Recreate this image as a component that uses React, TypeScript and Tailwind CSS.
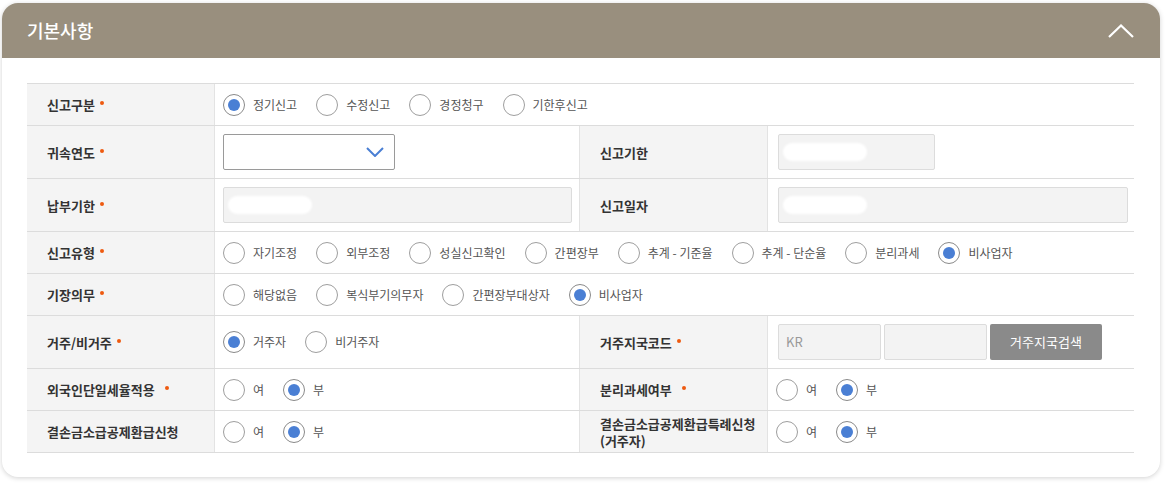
import React from "react";

type Opt = { label: string; checked?: boolean };

function Radio({ label, checked }: Opt) {
  return (
    <label className="flex items-center mr-[19px] shrink-0">
      <span
        className={`w-[22px] h-[22px] rounded-full border bg-white flex items-center justify-center ${
          checked ? "border-[#8a8a8a]" : "border-[#9e9e9e]"
        }`}
      >
        {checked && <span className="w-[12px] h-[12px] rounded-full bg-[#4a7fd4]" />}
      </span>
      <span className="ml-2 text-[12px] text-[#555] whitespace-pre">{label}</span>
    </label>
  );
}

function Radios({ items }: { items: Opt[] }) {
  return (
    <div className="flex items-center">
      {items.map((o) => (
        <Radio key={o.label} {...o} />
      ))}
    </div>
  );
}

function Label({ children, req, spaced }: { children: React.ReactNode; req?: boolean; spaced?: boolean }) {
  return (
    <div className="w-[187px] shrink-0 bg-[#f4f4f4] flex items-center pl-5 pr-2 text-[13px] font-semibold text-[#333] leading-[17px]">
      <div>{children}</div>
      {req && (
        <span
          className={`w-[4px] h-[4px] rounded-full bg-[#ee5a10] mb-[3px] ${spaced ? "ml-[10px]" : "ml-[5px]"}`}
        />
      )}
    </div>
  );
}

function Value({ children, wide }: { children?: React.ReactNode; wide?: boolean }) {
  return (
    <div
      className={`flex items-center pl-[8px] border-l border-[#e3e3e3] ${
        wide ? "flex-1" : "w-[366px] shrink-0 border-r"
      }`}
    >
      {children}
    </div>
  );
}

function Blob() {
  return <span className="block ml-[4px] w-[84px] h-[18px] rounded-[10px] bg-white blur-[1px]" />;
}

function Row({ children, tall }: { children: React.ReactNode; tall?: boolean }) {
  return (
    <div className={`flex border-b border-[#dcdcdc] ${tall ? "h-[53px]" : "h-[42px]"}`}>{children}</div>
  );
}

export default function App() {
  return (
    <div className="min-h-[488px] bg-white pt-[3px] pl-[2px] font-['Noto_Sans_CJK_KR','Noto_Sans',sans-serif]">
      <div className="w-[1158px] h-[474px] rounded-[16px] bg-white shadow-[0_1px_5px_rgba(0,0,0,0.18)] overflow-hidden">
        <div className="h-[55px] bg-[#998f7e] flex items-center justify-between pl-[25px] pr-[26px]">
          <h2 className="text-[18px] font-medium text-white">기본사항</h2>
          <svg width="26" height="14" viewBox="0 0 26 14" fill="none">
            <path d="M1 13 L13 1.5 L25 13" stroke="white" strokeWidth="2.2" />
          </svg>
        </div>

        <div className="mt-[25px] mx-[25px] w-[1107px] border-t border-[#dcdcdc]">
          <Row>
            <Label req>신고구분</Label>
            <Value wide>
              <Radios
                items={[
                  { label: "정기신고", checked: true },
                  { label: "수정신고" },
                  { label: "경정청구" },
                  { label: "기한후신고" },
                ]}
              />
            </Value>
          </Row>

          <Row tall>
            <Label req>귀속연도</Label>
            <Value>
              <div className="w-[172px] h-[36px] border border-[#9a9a9a] rounded-[2px] bg-white flex items-center justify-end pr-[10px]">
                <svg width="18" height="10" viewBox="0 0 18 10" fill="none">
                  <path d="M1 1 L9 9 L17 1" stroke="#4a7fd4" strokeWidth="2" />
                </svg>
              </div>
            </Value>
            <Label>신고기한</Label>
            <Value wide>
              <div className="ml-[2px] w-[157px] h-[36px] border border-[#dcdcdc] rounded-[2px] bg-[#f3f3f3] flex items-center">
                <Blob />
              </div>
            </Value>
          </Row>

          <Row tall>
            <Label req>납부기한</Label>
            <Value>
              <div className="w-[349px] h-[36px] border border-[#dcdcdc] rounded-[2px] bg-[#f3f3f3] flex items-center">
                <Blob />
              </div>
            </Value>
            <Label>신고일자</Label>
            <Value wide>
              <div className="ml-[2px] w-[350px] h-[36px] border border-[#dcdcdc] rounded-[2px] bg-[#f3f3f3] flex items-center">
                <Blob />
              </div>
            </Value>
          </Row>

          <Row>
            <Label req>신고유형</Label>
            <Value wide>
              <Radios
                items={[
                  { label: "자기조정" },
                  { label: "외부조정" },
                  { label: "성실신고확인" },
                  { label: "간편장부" },
                  { label: "추계 - 기준율" },
                  { label: "추계 - 단순율" },
                  { label: "분리과세" },
                  { label: "비사업자", checked: true },
                ]}
              />
            </Value>
          </Row>

          <Row>
            <Label req>기장의무</Label>
            <Value wide>
              <Radios
                items={[
                  { label: "해당없음" },
                  { label: "복식부기의무자" },
                  { label: "간편장부대상자" },
                  { label: "비사업자", checked: true },
                ]}
              />
            </Value>
          </Row>

          <Row tall>
            <Label req>거주/비거주</Label>
            <Value>
              <Radios items={[{ label: "거주자", checked: true }, { label: "비거주자" }]} />
            </Value>
            <Label req>거주지국코드</Label>
            <Value wide>
              <div className="ml-[2px] flex gap-[3px]">
                <div className="w-[103px] h-[36px] border border-[#dcdcdc] rounded-[2px] bg-[#f3f3f3] flex items-center pl-[7px] text-[13px] text-[#999]">
                  KR
                </div>
                <div className="w-[103px] h-[36px] border border-[#dcdcdc] rounded-[2px] bg-[#f3f3f3]" />
                <button className="w-[112px] h-[36px] rounded-[2px] bg-[#8a8a8a] text-white text-[13px]">
                  거주지국검색
                </button>
              </div>
            </Value>
          </Row>

          <Row>
            <Label req spaced>
              외국인단일세율적용
            </Label>
            <Value>
              <Radios items={[{ label: "여" }, { label: "부", checked: true }]} />
            </Value>
            <Label req spaced>
              분리과세여부
            </Label>
            <Value wide>
              <Radios items={[{ label: "여" }, { label: "부", checked: true }]} />
            </Value>
          </Row>

          <Row>
            <Label>결손금소급공제환급신청</Label>
            <Value>
              <Radios items={[{ label: "여" }, { label: "부", checked: true }]} />
            </Value>
            <Label>
              <div>결손금소급공제환급특례신청</div>
              <div>(거주자)</div>
            </Label>
            <Value wide>
              <Radios items={[{ label: "여" }, { label: "부", checked: true }]} />
            </Value>
          </Row>
        </div>
      </div>
    </div>
  );
}
